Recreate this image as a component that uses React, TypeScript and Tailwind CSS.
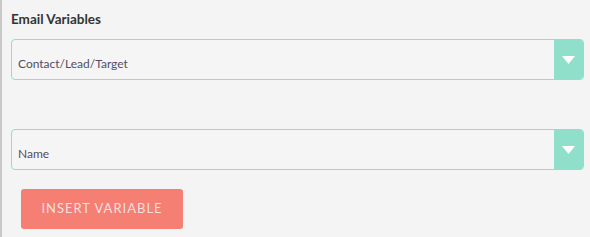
export default function App() {
  const selects = ["Contact/Lead/Target", "Name"];
  return (
    <div className="h-[237px] w-[590px] overflow-hidden border-l-2 border-[#c8c8c8] bg-[#f4f4f4] font-['Lato',sans-serif]">
      <div className="pl-[9px] pr-[6px] pt-[11px]">
        <h3 className="text-[13.5px] font-bold leading-4 text-[#333]">Email Variables</h3>
        <div className="mt-[12px] flex flex-col gap-[49px]">
          {selects.map((s) => (
            <div
              key={s}
              className="flex h-[41px] w-[573px] items-stretch overflow-hidden rounded-[4px] border border-[#8fdfcb] bg-[#f5f5f5]"
            >
              <span className="flex flex-1 items-center pl-[6px] pt-[8px] text-[12px] text-[#534d64]">{s}</span>
              <span className="flex w-[29px] items-center justify-center bg-[#8fdfcb]">
                <svg width="13" height="8" viewBox="0 0 13 8">
                  <path d="M0 0h13L6.5 8z" fill="#fff" />
                </svg>
              </span>
            </div>
          ))}
        </div>
        <button className="ml-[10px] mt-[19px] h-[40px] w-[162px] rounded-[3px] bg-[#f47f72] text-[13px] tracking-[1px] text-[#f7dfe0]">
          INSERT VARIABLE
        </button>
      </div>
    </div>
  );
}
